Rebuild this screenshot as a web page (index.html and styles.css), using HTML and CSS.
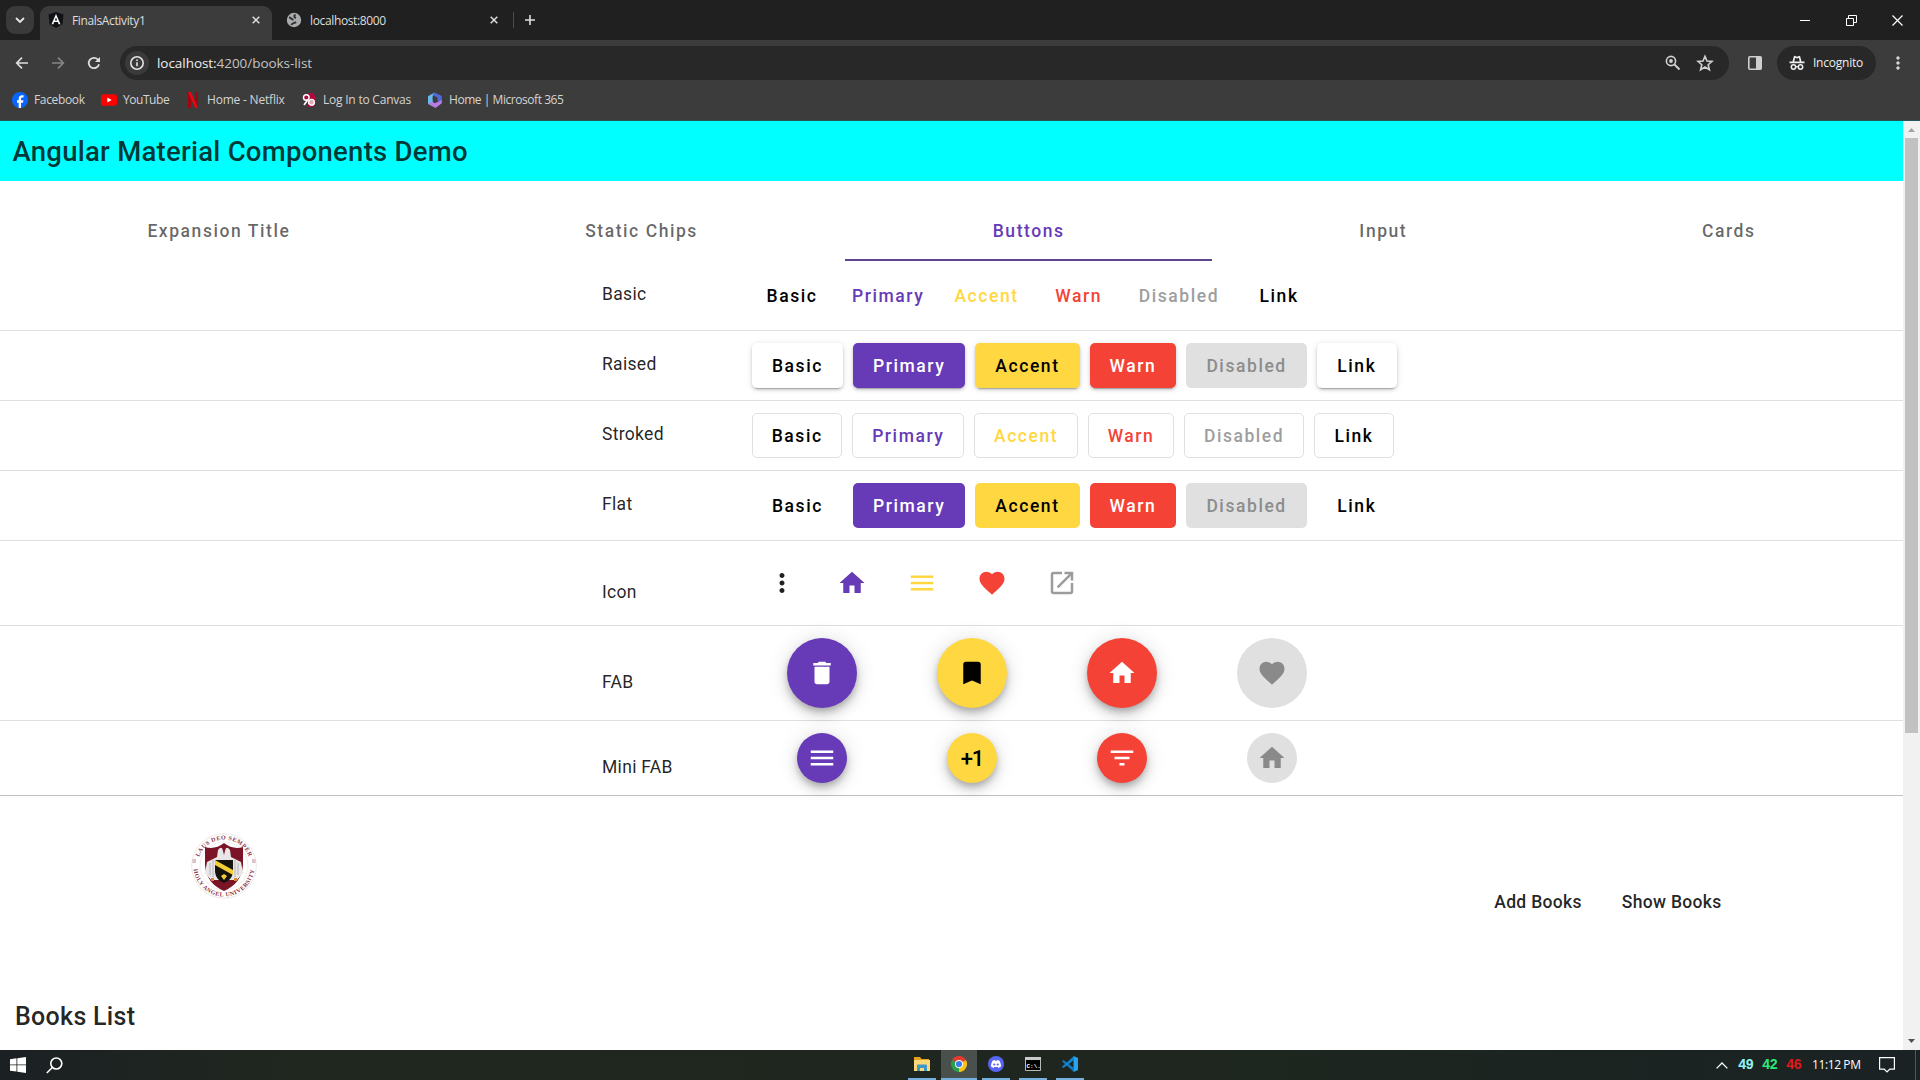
FILE: index.html
```html
<!DOCTYPE html>
<html lang="en">
<head>
<meta charset="utf-8">
<title>FinalsActivity1</title>
<link rel="stylesheet" href="styles.css">
</head>
<body>
<svg class="defs" width="0" height="0">
  <symbol id="home" viewBox="0 0 24 24"><path d="M10 20v-6h4v6h5v-8h3L12 3 2 12h3v8z"/></symbol>
  <symbol id="menu" viewBox="0 0 24 24"><path d="M3 18h18v-2H3v2zm0-5h18v-2H3v2zm0-7v2h18V6H3z"/></symbol>
  <symbol id="heart" viewBox="0 0 24 24"><path d="M12 21.35l-1.45-1.32C5.4 15.36 2 12.28 2 8.5 2 5.42 4.42 3 7.5 3c1.74 0 3.41.81 4.5 2.09C13.09 3.81 14.76 3 16.5 3 19.58 3 22 5.42 22 8.5c0 3.78-3.4 6.86-8.55 11.54L12 21.35z"/></symbol>
  <symbol id="more" viewBox="0 0 24 24"><path d="M12 8c1.1 0 2-.9 2-2s-.9-2-2-2-2 .9-2 2 .9 2 2 2zm0 2c-1.1 0-2 .9-2 2s.9 2 2 2 2-.9 2-2-.9-2-2-2zm0 6c-1.1 0-2 .9-2 2s.9 2 2 2 2-.9 2-2-.9-2-2-2z"/></symbol>
  <symbol id="close" viewBox="0 0 8 8"><path d="M.7.7l6.6 6.6M7.3.7L.7 7.3" fill="none" stroke="#dedede" stroke-width="1.5"/></symbol>
</svg>

<div class="tabstrip">
  <div class="tab-search"><svg width="10" height="6" viewBox="0 0 10 6"><path d="M1 1l4 4 4-4" fill="none" stroke="#e8e8e8" stroke-width="1.8"/></svg></div>
  <div class="browser-tab active">
    <svg width="16" height="16" viewBox="0 0 16 16"><path d="M8 0l7.5 2.6-1.1 9.7L8 16l-6.400-3.700L.5 2.600z" fill="#101216"/><path d="M8 2L3.500 12.300h1.800l.9-2.300h3.600l.9 2.300h1.800zM8 5.400l1.200 3.100H6.800z" fill="#fff" fill-rule="evenodd"/></svg>
    <span class="tab-title">FinalsActivity1</span>
    <svg class="x" width="8" height="8"><use href="#close"/></svg>
  </div>
  <div class="browser-tab">
    <svg width="16" height="16" viewBox="0 0 16 16"><circle cx="8" cy="8" r="7.200" fill="#a9abad"/><path d="M3 5.500c2 0 2.300 2 4.500 2.200M9.500 2.500c-1.800 1-1.500 3 .5 3.500M5.500 13c0-2 3-1.500 4.500-3" fill="none" stroke="#303234" stroke-width="2"/></svg>
    <span class="tab-title">localhost:8000</span>
    <svg class="x" width="8" height="8"><use href="#close"/></svg>
  </div>
  <div class="tab-sep"></div>
  <svg class="plus" width="12" height="12" viewBox="0 0 12 12"><path d="M6 1v10M1 6h10" stroke="#dedede" stroke-width="1.600"/></svg>
  <div class="window-controls">
    <svg width="11" height="11" viewBox="0 0 11 11"><path d="M0 5.500h10" stroke="#fff"/></svg>
    <svg width="11" height="11" viewBox="0 0 11 11"><path d="M.5 3.500h7v7h-7zM2.500 3.500v-3h8v7h-3" fill="none" stroke="#fff"/></svg>
    <svg width="11" height="11" viewBox="0 0 11 11"><path d="M.5.5l10 10M10.500.5l-10 10" stroke="#fff" stroke-width="1.200"/></svg>
  </div>
</div>

<div class="toolbar">
  <svg class="nav" width="16" height="16" viewBox="0 0 16 16"><path d="M14 8H3M8 2.700L2.700 8 8 13.300" fill="none" stroke="#dedede" stroke-width="1.700"/></svg>
  <svg class="nav" width="16" height="16" viewBox="0 0 16 16"><path d="M2 8h11M8 2.700L13.300 8 8 13.300" fill="none" stroke="#858585" stroke-width="1.700"/></svg>
  <svg class="nav" width="16" height="16" viewBox="0 0 16 16"><path d="M13 9.200A5.200 5.200 0 1 1 11.800 4.500L13.300 6" fill="none" stroke="#dedede" stroke-width="1.800"/><path d="M14 2v5H9z" fill="#dedede"/></svg>
  <div class="omnibox">
    <div class="site-info"><svg width="16" height="16" viewBox="0 0 16 16"><circle cx="8" cy="8" r="6.200" fill="none" stroke="#e3e3e3" stroke-width="1.600"/><path d="M8 7.200v4M8 4.400v1.700" stroke="#e3e3e3" stroke-width="1.600"/></svg></div>
    <span class="url">localhost:<i>4200/books-list</i></span>
    <svg class="zoom-ic" width="16" height="16" viewBox="0 0 16 16"><circle cx="6" cy="6" r="4.600" fill="none" stroke="#d0d0d0" stroke-width="1.600"/><path d="M9.500 9.500l5 5" stroke="#d0d0d0" stroke-width="2"/><circle cx="6" cy="6" r="1.900" fill="#d0d0d0"/></svg>
    <svg width="18" height="18" viewBox="0 0 18 18"><path d="M9 2.300l2 4.700 5 .4-3.800 3.300 1.200 5L9 13l-4.400 2.700 1.200-5L2 7.400 7 7z" fill="none" stroke="#d0d0d0" stroke-width="1.600"/></svg>
  </div>
  <svg class="side" width="16" height="16" viewBox="0 0 16 16"><rect x="1.800" y="1.800" width="12.400" height="12.400" rx="1" fill="none" stroke="#cfcfcf" stroke-width="1.600"/><path d="M9 2h5v12H9z" fill="#cfcfcf"/></svg>
  <div class="incognito">
    <svg width="16" height="16" viewBox="0 0 16 16"><path d="M.5 7.300h15M4.200 7L5.600 1.800l2.400.8 2.400-.8L11.800 7" fill="none" stroke="#eee" stroke-width="1.700"/><circle cx="4.500" cy="12" r="2.200" fill="none" stroke="#eee" stroke-width="1.500"/><circle cx="11.500" cy="12" r="2.200" fill="none" stroke="#eee" stroke-width="1.500"/><path d="M6.500 11.700h3" stroke="#eee" stroke-width="1.200"/></svg>
    <span>Incognito</span>
  </div>
  <svg class="kebab" width="20" height="20" fill="#d8d8d8"><use href="#more"/></svg>
</div>

<div class="bookmarks">
  <div class="bm bm-facebook"><svg width="16" height="16" viewBox="0 0 16 16"><circle cx="8" cy="8" r="8" fill="#0866ff"/><path d="M6.700 16v-5.300H5V8.300h1.700V7c0-2.600 1.200-3.800 3.500-3.800l1.300.1v2.200h-1c-1.100 0-1.500.5-1.500 1.500v1.300h2.400l-.4 2.400H9V16z" fill="#fff"/></svg><span>Facebook</span></div>
  <div class="bm bm-youtube"><svg width="16" height="16" viewBox="0 0 16 16"><rect y="2.300" width="16" height="11.400" rx="2.800" fill="#f00"/><path d="M6.300 5.500L10.700 8l-4.400 2.500z" fill="#fff"/></svg><span>YouTube</span></div>
  <div class="bm bm-netflix"><svg width="16" height="16" viewBox="0 0 16 16"><path d="M3 0h3v15.700L3 16zM10 0h3v16l-3-.3z" fill="#a0060f"/><path d="M3 0h3l7 16-3-.3z" fill="#e50914"/></svg><span>Home - Netflix</span></div>
  <div class="bm bm-canvas"><svg width="16" height="16" viewBox="0 0 16 16"><path d="M6 1h6l3 4v7l-4 3H7z" fill="#b00a3c"/><circle cx="5.300" cy="5.500" r="2.800" fill="#b00a3c" stroke="#fff" stroke-width="1.400"/><circle cx="10.500" cy="10.300" r="2.900" fill="#dfa9b6" stroke="#fff" stroke-width="1.400"/><path d="M7 7.500L3 13" stroke="#fff" stroke-width="1.700"/></svg><span>Log In to Canvas</span></div>
  <div class="bm bm-office"><svg width="16" height="16" viewBox="0 0 16 16"><path d="M7.500.5L1 4.200v7.500L6 14.500 5.500 5z" fill="#68b8ee"/><path d="M7.500.5L14.800 4v7L10.500 9 10.300 5.500 5.500 3z" fill="#5267d8"/><path d="M1 11.700L8.500 16l6.300-4.800V8l-7 3.300-2.300-1.500z" fill="#b87be6"/></svg><span>Home | Microsoft 365</span></div>
</div>

<div class="viewport">
  <div class="page">
    <header class="app-bar">Angular Material Components Demo</header>
    <nav class="tabs">
      <div class="tab">Expansion Title</div>
      <div class="tab">Static Chips</div>
      <div class="tab selected">Buttons</div>
      <div class="tab">Input</div>
      <div class="tab">Cards</div>
    </nav>

    <section class="row"><div class="label">Basic</div><div class="items text">
      <button class="btn">Basic</button><button class="btn primary">Primary</button><button class="btn accent">Accent</button><button class="btn warn">Warn</button><button class="btn" disabled>Disabled</button><a class="btn">Link</a></div></section>
    <section class="row"><div class="label">Raised</div><div class="items filled raised">
      <button class="btn">Basic</button><button class="btn primary">Primary</button><button class="btn accent">Accent</button><button class="btn warn">Warn</button><button class="btn" disabled>Disabled</button><a class="btn">Link</a></div></section>
    <section class="row"><div class="label">Stroked</div><div class="items stroked">
      <button class="btn">Basic</button><button class="btn primary">Primary</button><button class="btn accent">Accent</button><button class="btn warn">Warn</button><button class="btn" disabled>Disabled</button><a class="btn">Link</a></div></section>
    <section class="row"><div class="label">Flat</div><div class="items filled">
      <button class="btn">Basic</button><button class="btn primary">Primary</button><button class="btn accent">Accent</button><button class="btn warn">Warn</button><button class="btn" disabled>Disabled</button><a class="btn">Link</a></div></section>

    <section class="row low"><div class="label">Icon</div><div class="items icons">
      <div class="icon-btn"><svg class="ic"><use href="#more"/></svg></div>
      <div class="icon-btn primary"><svg class="ic"><use href="#home"/></svg></div>
      <div class="icon-btn accent"><svg class="ic"><use href="#menu"/></svg></div>
      <div class="icon-btn warn"><svg class="ic"><use href="#heart"/></svg></div>
      <div class="icon-btn off"><svg class="ic" viewBox="0 0 24 24"><path d="M19 19H5V5h7V3H5c-1.110 0-2 .9-2 2v14c0 1.100.89 2 2 2h14c1.100 0 2-.9 2-2v-7h-2v7zM14 3v2h3.590l-9.830 9.830 1.410 1.410L19 6.410V10h2V3h-7z"/></svg></div></div></section>

    <section class="row low"><div class="label">FAB</div><div class="items fabs">
      <div class="slot"><div class="fab primary"><svg class="ic" viewBox="0 0 24 24"><path d="M6 19c0 1.100.9 2 2 2h8c1.100 0 2-.9 2-2V7H6v12zM19 4h-3.500l-1-1h-5l-1 1H5v2h14V4z"/></svg></div></div>
      <div class="slot"><div class="fab accent"><svg class="ic" viewBox="0 0 24 24"><path d="M17 3H7c-1.100 0-1.990.9-1.990 2L5 21l7-3 7 3V5c0-1.100-.9-2-2-2z"/></svg></div></div>
      <div class="slot"><div class="fab warn"><svg class="ic"><use href="#home"/></svg></div></div>
      <div class="slot"><div class="fab off"><svg class="ic"><use href="#heart"/></svg></div></div></div></section>

    <section class="row low last"><div class="label">Mini FAB</div><div class="items fabs">
      <div class="slot"><div class="fab mini primary"><svg class="ic"><use href="#menu"/></svg></div></div>
      <div class="slot"><div class="fab mini accent"><span class="plus-one">+1</span></div></div>
      <div class="slot"><div class="fab mini warn"><svg class="ic" viewBox="0 0 24 24"><path d="M10 18h4v-2h-4v2zM3 6v2h18V6H3zm3 7h12v-2H6v2z"/></svg></div></div>
      <div class="slot"><div class="fab mini off"><svg class="ic"><use href="#home"/></svg></div></div></div></section>

    <div class="books-nav">
      <svg class="seal" width="66" height="66" viewBox="0 0 66 66">
        <defs><path id="arcTop" d="M6.500 33a26.500 26.500 0 0 1 53 0"/><path id="arcBottom" d="M2.500 33a30.500 30.500 0 0 0 61 0"/></defs>
        <circle cx="33" cy="33" r="32.300" fill="#fff" stroke="#eadfe1" stroke-width=".8"/>
        <circle cx="33" cy="33" r="24" fill="none" stroke="#eadfe1" stroke-width=".6"/>
        <text class="seal-text"><textPath href="#arcTop" startOffset="50%" text-anchor="middle">LAUS DEO SEMPER</textPath></text>
        <text class="seal-text"><textPath href="#arcBottom" startOffset="50%" text-anchor="middle">HOLY ANGEL UNIVERSITY</textPath></text>
        <path d="M1.500 27h3.500M1.500 29h3.500M61 27h3.500M61 29h3.500" stroke="#b9858e"/>
        <path d="M14 14q10 3 19-4 9 7 19 4v18q-1 18-19 26Q15 50 14 32z" fill="#7b1426"/>
        <path d="M27 17q4-5 5 1l1 4 1-4q1-6 5-1l1 7 10 5 2 11-6 7H20l-6-7 2-11 10-5z" fill="#e9e6e7"/>
        <path d="M19 30v12M22 27v17M44 27v17M47 30v12" stroke="#b9b3b7"/>
        <path d="M24 27h18v12q-1 8-9 11-8-3-9-11z" fill="#16120c"/>
        <path d="M24 27l18 10v5L24 32zM30 43l3-2 3 2-3 4z" fill="#f3cf35"/>
        <path d="M20 46.500h3M43 46.500h3" stroke="#d98a35" stroke-width="3"/>
      </svg>
      <div class="links"><a>Add Books</a><a>Show Books</a></div>
    </div>
    <h2 class="list-title">Books List</h2>
  </div>
  <div class="scrollbar">
    <svg width="17" height="17" viewBox="0 0 17 17"><path d="M5 11l3.500-4 3.500 4z" fill="#a3a3a3"/></svg>
    <div class="thumb"></div>
    <svg width="17" height="17" viewBox="0 0 17 17"><path d="M5 6l3.500 4L12 6z" fill="#505050"/></svg>
  </div>
</div>

<div class="taskbar">
  <svg class="start" width="16" height="16" viewBox="0 0 16 16"><path d="M0 2.200L6.500 1.300v6.200H0zM7.300 1.200L16 0v7.500H7.300zM0 8.300h6.500v6.300L0 13.700zM7.300 8.300H16V16l-8.700-1.200z" fill="#fff"/></svg>
  <svg class="search" width="17" height="17" viewBox="0 0 17 17"><circle cx="10.300" cy="6.500" r="5.500" fill="none" stroke="#fff" stroke-width="1.600"/><path d="M6.300 10.500L.8 16" stroke="#fff" stroke-width="1.600"/></svg>
  <div class="apps">
    <div class="app"><svg width="18" height="16" viewBox="0 0 18 16"><path d="M1 1h6l1.500 2H16v3H1z" fill="#e5a31d"/><path d="M1 4h16v11H1z" fill="#fbd977"/><path d="M4 15V9.500q0-1 1-1h8q1 0 1 1V15h-3v-3H7v3z" fill="#3f96c8"/></svg></div>
    <div class="app current"><svg width="16" height="16" viewBox="0 0 16 16"><path d="M8 8L1.070 4A8 8 0 0 1 14.930 4z" fill="#e33b2e"/><path d="M8 8L14.930 4A8 8 0 0 1 8 16z" fill="#fbc116"/><path d="M8 8v8A8 8 0 0 1 1.070 4z" fill="#299f49"/><circle cx="8" cy="8" r="4" fill="#fff"/><circle cx="8" cy="8" r="3.100" fill="#3a7ce8"/></svg></div>
    <div class="app"><svg width="16" height="16" viewBox="0 0 16 16"><circle cx="8" cy="8" r="8" fill="#5865f2"/><path d="M4.500 4.800Q6 4 6.800 4l.4.700h1.600l.4-.7q.8 0 2.300.8Q13 7.500 13 10.600q-1.200 1-2.600 1.400l-.7-1.100H6.300L5.600 12Q4.200 11.600 3 10.600q0-3.100 1.500-5.800z" fill="#fff"/><circle cx="6.300" cy="8.500" r="1.100" fill="#5865f2"/><circle cx="9.700" cy="8.500" r="1.100" fill="#5865f2"/></svg></div>
    <div class="app"><svg width="16" height="14" viewBox="0 0 16 14"><path d="M.5.500h15v13H.5z" fill="#000" stroke="#b9b9b9"/><path d="M0 0h16v3H0z" fill="#c9c9c9"/><text class="cmd-text" x="1.500" y="10.500">C:\.</text></svg></div>
    <div class="app"><svg width="16" height="16" viewBox="0 0 16 16"><path d="M11.500 0L16 2v12l-4.500 2z" fill="#2aa3ee"/><path d="M0 5.200L1.500 4 12 12v4z" fill="#1179c4"/><path d="M0 10.800L1.500 12 12 4V0z" fill="#0e86d3"/></svg></div>
  </div>
  <div class="tray">
    <svg width="12" height="7" viewBox="0 0 12 7"><path d="M.6 6.400L6 1l5.400 5.400" fill="none" stroke="#fff" stroke-width="1.300"/></svg>
    <b class="t1">49</b><b class="t2">42</b><b class="t3">46</b>
    <span class="clock">11:12 PM</span>
    <svg class="note" width="16" height="16" viewBox="0 0 16 16"><path d="M.6.600h14.800v11.500h-4.600L8 15l-2.800-2.900H.6z" fill="none" stroke="#fff" stroke-width="1.200"/></svg>
    <div class="peek"></div>
  </div>
</div>
</body>
</html>
```
FILE: styles.css
```css
* { box-sizing: border-box; }
body { margin: 0; width: 1920px; height: 1080px; overflow: hidden; display: flex; flex-direction: column; background: #fff; font-family: Roboto, sans-serif; }
svg { display: block; flex: none; }
.defs { position: absolute; }

/* browser chrome */
.tabstrip, .toolbar, .bookmarks, .taskbar { font-family: "Open Sans", "Noto Sans", sans-serif; color: #dedede; flex: none; white-space: nowrap; }
.tabstrip { height: 40px; background: #202020; display: flex; align-items: center; padding-left: 6px; }
.tab-search { width: 28px; height: 28px; border-radius: 9px; background: #3a3a3a; display: grid; place-items: center; margin-right: 6px; }
.browser-tab { width: 232px; height: 34px; align-self: flex-end; display: flex; align-items: center; padding: 0 12px 6px 8px; font-size: 12px; letter-spacing: -.36px; }
.browser-tab + .browser-tab { width: 241px; padding: 0 15px 6px 14px; }
.browser-tab.active { background: #3c3c3c; border-radius: 9px 9px 0 0; }
.tab-title { margin-left: 8px; flex: 1; }
.tab-sep { width: 1px; height: 16px; background: #4c4c4c; }
.plus { margin-left: 10px; }
.window-controls { margin-left: auto; display: flex; gap: 35px; padding-right: 17px; }
.toolbar { height: 45px; background: #3c3c3c; display: flex; align-items: center; padding-left: 14px; }
.nav { margin-right: 20px; }
.nav:nth-child(3) { margin-right: 18px; }
.omnibox { width: 1609px; height: 34px; border-radius: 17px; background: #282828; display: flex; align-items: center; padding: 0 15px 0 5px; margin-top: 1px; }
.site-info { width: 24px; height: 24px; border-radius: 12px; background: #3a3a3a; display: grid; place-items: center; }
.url { margin-left: 8px; font-size: 13.500px; letter-spacing: -.05px; color: #eee; flex: 1; }
.url i { font-style: normal; color: #c4c4c4; }
.zoom-ic { margin-right: 15px; }
.side { margin: 0 14px 0 18px; }
.incognito { width: 99px; height: 34px; border-radius: 17px; background: #282828; display: flex; align-items: center; padding-left: 12px; gap: 8px; font-size: 12px; letter-spacing: -.23px; color: #eee; }
.kebab { margin-left: 12px; }
.bookmarks { height: 36px; background: #3c3c3c; border-bottom: 1px solid #23585a; display: flex; padding: 0 0 6px 12px; align-items: center; font-size: 12px; letter-spacing: -.35px; color: #d4d4d4; }
.bm { display: flex; align-items: center; gap: 6px; }
.bm-facebook { width: 89px; }
.bm-youtube { width: 84px; letter-spacing: -.45px; }
.bm-netflix { width: 116px; letter-spacing: -.2px; }
.bm-canvas { width: 126px; letter-spacing: -.22px; }
.bm-office { letter-spacing: -.45px; }

/* web page */
.viewport { height: 929px; flex: none; display: flex; }
.page { width: 1903px; height: 929px; overflow: hidden; display: flex; flex-direction: column; }
.app-bar { height: 60px; flex: none; background: #0ff; padding-left: 12.500px; font-weight: 500; font-size: 27.500px; letter-spacing: .26px; line-height: 61px; color: rgba(0,0,0,.8); }
.tabs { margin-top: 20px; height: 60px; flex: none; display: flex; }
.tab { flex: 1 1 auto; padding: 0 30px; text-align: center; font-size: 17.500px; line-height: 61px; font-weight: 500; letter-spacing: 1.560px; color: rgba(0,0,0,.6); }
.tab.selected { color: #673ab7; border-bottom: 2px solid #5f4490; }
.row { flex: none; display: flex; align-items: center; padding: 12px 0 12px 602px; border-bottom: 1px solid #dfdfdf; }
.row.last { border-bottom-color: #bfbfbf; }
.label { width: 150px; font-size: 17.500px; letter-spacing: .31px; line-height: 24px; color: rgba(0,0,0,.87); padding-bottom: 3px; }
.low .label { padding: 17px 0 0; }
.items { display: flex; gap: 10px; }
.btn { font: 500 17.500px/44px Roboto, sans-serif; letter-spacing: 1.570px; height: 45px; min-width: 80px; border: 0; border-radius: 5px; background: transparent; color: #000; text-align: center; padding: 1px 20px 0; }
.text .btn { padding: 1px 10px 0; }
.stroked .btn { padding: 1px 18.750px 0; border: 1px solid #e0e0e0; line-height: 43px; letter-spacing: 1.560px; }
.primary { color: #673ab7; }
.accent { color: #ffd740; }
.warn { color: #f44336; }
.btn:disabled { color: #9e9e9e; }
.filled .primary { background: #673ab7; color: #fff; }
.filled .accent { background: #ffd740; color: #000; }
.filled .warn { background: #f44336; color: #fff; }
.filled .btn:disabled { background: #e0e0e0; color: #8c8c8c; }
.raised .btn:not(:disabled) { box-shadow: 0 4px 1px -3px rgba(0,0,0,.2), 0 2px 3px rgba(0,0,0,.14), 0 1px 6px rgba(0,0,0,.12); }
.ic { width: 30px; height: 30px; fill: currentColor; }
.icons { color: #212121; }
.icon-btn { width: 60px; height: 60px; display: grid; place-items: center; }
.icon-btn.off { color: #9c9c9c; }
.fabs { gap: 0; margin-left: -5px; }
.slot { width: 150px; display: grid; place-items: center; }
.fab { width: 70px; height: 70px; border-radius: 50%; display: grid; place-items: center; color: #fff; box-shadow: 0 4px 6px -1px rgba(0,0,0,.2), 0 7px 12px rgba(0,0,0,.14), 0 1px 22px rgba(0,0,0,.12); }
.fab.mini { width: 50px; height: 50px; }
.fab.primary { background: #673ab7; }
.fab.accent { background: #ffd740; color: #000; }
.fab.warn { background: #f44336; }
.fab.off { background: #e0e0e0; color: #8a8a8a; box-shadow: none; }
.plus-one { font-size: 22px; font-weight: 500; letter-spacing: -1px; line-height: 51px; }
.books-nav { flex: none; height: 171px; display: flex; justify-content: space-between; padding: 37px 181.500px 0 191px; }
.seal-text { font: bold 6px "Liberation Serif", serif; letter-spacing: .5px; fill: #8d3545; }
.links { display: flex; gap: 40px; padding-top: 57px; font-size: 17.500px; letter-spacing: .31px; line-height: 24px; font-weight: 500; color: rgba(0,0,0,.87); }
.list-title { margin: 30px 0 0 15px; font-size: 25px; letter-spacing: .3px; line-height: 40px; font-weight: 500; color: rgba(0,0,0,.87); }
.scrollbar { width: 17px; background: #f1f1f1; display: flex; flex-direction: column; }
.thumb { width: 13px; height: 595px; margin: 0 2px auto; background: #c1c1c1; }

/* taskbar */
.taskbar { height: 30px; display: flex; align-items: center; background: linear-gradient(90deg, #1b2123, #20271f 300px, #1e261f 1200px, #1a2224); padding-left: 10px; }
.search { margin-left: 20px; }
.apps { display: flex; margin-left: 843px; height: 30px; gap: 5px; align-items: stretch; }
.app { width: 28px; margin: 0 2px; border-bottom: 2px solid #76b0de; display: grid; place-items: center; }
.apps .current { width: 36px; background: #4a504b; margin: 0 -2px; }
.cmd-text { font: bold 6px "Liberation Mono", monospace; fill: #fff; }
.tray { margin-left: auto; display: flex; align-items: center; height: 30px; }
.tray b { font: bold 14px "Liberation Mono", monospace; letter-spacing: -1px; width: 14px; margin-left: 10px; }
.t1 { color: #8ff3f0; }
.t2 { color: #2be878; }
.t3 { color: #e01818; }
.clock { font-size: 12px; letter-spacing: -.4px; color: #fff; margin-left: 12px; width: 67px; padding-bottom: 1px; }
.peek { width: 1px; height: 30px; background: #50585a; margin: 0 4px 0 20px; }
```
